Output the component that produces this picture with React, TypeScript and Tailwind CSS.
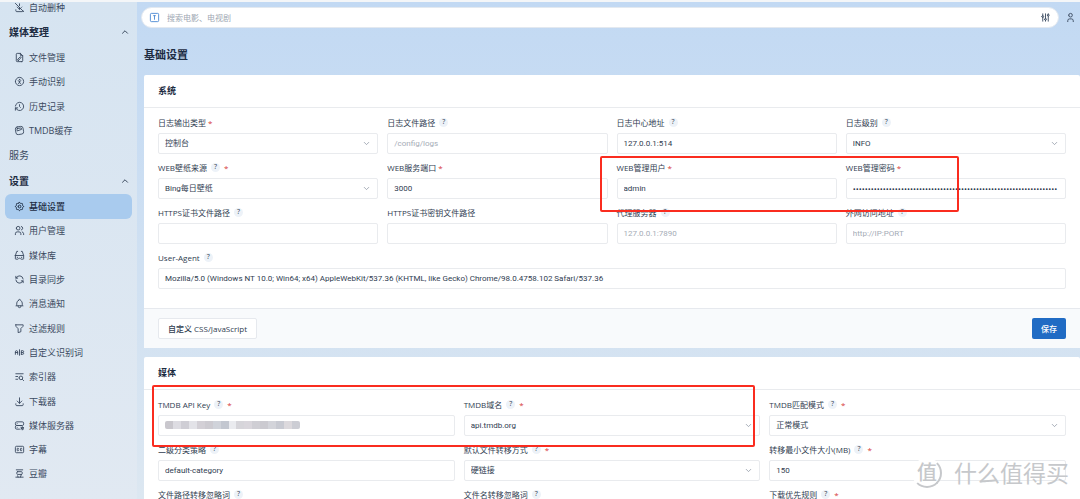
import React, { useId } from 'react';
import clsx from 'clsx';
import {
  TbAB,
  TbAccessible,
  TbAdjustments,
  TbBadgeCc,
  TbBell,
  TbBrandHeadlessui,
  TbChevronDown,
  TbChevronUp,
  TbDownload,
  TbDownloadOff,
  TbFilePencil,
  TbFilter,
  TbHistory,
  TbListSearch,
  TbRefresh,
  TbServerCog,
  TbSettings,
  TbSquareLetterT,
  TbStereoGlasses,
  TbUser,
  TbUsers,
} from 'react-icons/tb';

type IconType = React.ComponentType<{ className?: string }>;

function DoubanIcon({ className }: { className?: string }) {
  return (
    <svg
      viewBox="0 0 24 24"
      fill="none"
      stroke="currentColor"
      strokeWidth="2"
      strokeLinecap="round"
      strokeLinejoin="round"
      className={className}
    >
      <path d="M4 20h16" />
      <path d="M5 4h14" />
      <path d="M8 8h8a2 2 0 0 1 2 2v2a2 2 0 0 1 -2 2h-8a2 2 0 0 1 -2 -2v-2a2 2 0 0 1 2 -2z" />
      <path d="M16 14l-2 6" />
      <path d="M8 17l1 3" />
    </svg>
  );
}

const organizeItems: { label: string; icon: IconType }[] = [
  { label: '文件管理', icon: TbFilePencil },
  { label: '手动识别', icon: TbAccessible },
  { label: '历史记录', icon: TbHistory },
  { label: 'TMDB缓存', icon: TbBrandHeadlessui },
];

const settingItems: { label: string; icon: IconType }[] = [
  { label: '基础设置', icon: TbSettings },
  { label: '用户管理', icon: TbUsers },
  { label: '媒体库', icon: TbStereoGlasses },
  { label: '目录同步', icon: TbRefresh },
  { label: '消息通知', icon: TbBell },
  { label: '过滤规则', icon: TbFilter },
  { label: '自定义识别词', icon: TbAB },
  { label: '索引器', icon: TbListSearch },
  { label: '下载器', icon: TbDownload },
  { label: '媒体服务器', icon: TbServerCog },
  { label: '字幕', icon: TbBadgeCc },
  { label: '豆瓣', icon: DoubanIcon },
];

function NavItem({ label, icon: Icon, active }: { label: string; icon: IconType; active?: boolean }) {
  return (
    <a
      href="#"
      className={clsx(
        'flex min-h-0 flex-1 items-center rounded-md pl-[9px] text-[9px] leading-none',
        active ? 'bg-[#a9cbee] font-medium text-[#1d2c42]' : 'text-[#3b4a60]'
      )}
    >
      <Icon className="mr-1 h-[11px] w-[11px]" />
      {label}
    </a>
  );
}

function NavGroup({ label }: { label: string }) {
  return (
    <button
      type="button"
      className="flex h-[26px] shrink-0 items-center justify-between pl-1 pr-[2px] text-[10px] font-bold text-[#1d2c42]"
    >
      {label}
      <TbChevronUp className="h-[10px] w-[10px]" />
    </button>
  );
}

function Sidebar() {
  return (
    <aside className="w-[137px] shrink-0 overflow-hidden bg-linear-to-b from-[#d6e4f1] to-[#e1e9f2]">
      <nav className="-mt-[7px] flex h-full flex-col px-[5px] pb-[6px]">
        <NavItem label="自动删种" icon={TbDownloadOff} />
        <NavGroup label="媒体整理" />
        {organizeItems.map((item) => (
          <NavItem key={item.label} {...item} />
        ))}
        <a href="#" className="flex h-[26px] shrink-0 items-center pl-1 text-[10px] text-[#3b4a60]">
          服务
        </a>
        <NavGroup label="设置" />
        {settingItems.map((item, i) => (
          <NavItem key={item.label} {...item} active={i === 0} />
        ))}
      </nav>
    </aside>
  );
}

interface FieldProps {
  label: string;
  value?: string;
  placeholder?: string;
  type?: 'text' | 'password' | 'select';
  help?: boolean;
  required?: boolean;
  masked?: boolean;
  className?: string;
}

function MaskedKey() {
  return (
    <div className="absolute top-[6px] left-[7px] flex h-2 w-[135px] overflow-hidden rounded-xs">
      <span className="flex-1 bg-[#c9c7cd]" />
      <span className="flex-1 bg-[#dddce2]" />
      <span className="flex-1 bg-[#cfced5]" />
      <span className="flex-1 bg-[#e3e3e8]" />
      <span className="flex-1 bg-[#d3d0d6]" />
      <span className="flex-1 bg-[#cdcbd1]" />
      <span className="flex-1 bg-[#d0d3da]" />
      <span className="flex-1 bg-[#c3c7d0]" />
      <span className="flex-1 bg-[#eaebef]" />
      <span className="flex-1 bg-[#d6d5da]" />
      <span className="flex-1 bg-[#d9d6dc]" />
      <span className="flex-1 bg-[#cfced4]" />
      <span className="flex-1 bg-[#cbcad0]" />
      <span className="flex-1 bg-[#d3d4da]" />
      <span className="flex-1 bg-[#c8cad2]" />
      <span className="flex-1 bg-[#dcd9dd]" />
      <span className="flex-1 bg-[#cccdd4]" />
    </div>
  );
}

function Field({ label, value, placeholder, type = 'text', help, required, masked, className }: FieldProps) {
  const id = useId();
  const control = clsx(
    'block h-[21px] w-full appearance-none rounded-xs border border-[#e9ebee] bg-white px-[6px] text-[8px] text-[#2f3c50] outline-none placeholder:text-[#a5acb6]',
    type !== 'password' && "font-['Roboto','Noto_Sans_CJK_SC',sans-serif]"
  );

  return (
    <div className={className}>
      <div className="mb-[5px] flex h-[11px] items-center text-[8px] text-[#2f3c50]">
        <label htmlFor={id}>{label}</label>
        {help && (
          <span className="ml-1 flex h-[9px] w-[9px] items-center justify-center rounded-full bg-[#edf2f8] text-[7px]">
            ?
          </span>
        )}
        {required && <span className={clsx('text-[#d63939]', help ? 'ml-1' : 'ml-[2px]')}>*</span>}
      </div>
      <div className="relative">
        {type === 'select' ? (
          <>
            <select id={id} className={control}>
              <option>{value}</option>
            </select>
            <TbChevronDown className="pointer-events-none absolute top-[6px] right-[7px] h-[9px] w-[9px] text-[#8b94a1]" />
          </>
        ) : (
          <input id={id} type={type} defaultValue={value} placeholder={placeholder} className={control} />
        )}
        {masked && <MaskedKey />}
      </div>
    </div>
  );
}

function CardHeader({ title }: { title: string }) {
  return (
    <div className="flex h-[33px] items-center border-b border-[#e9ebee] px-[14px]">
      <h3 className="text-[9px] font-bold text-[#1d2c42]">{title}</h3>
    </div>
  );
}

function SystemCard() {
  return (
    <section className="rounded-xs bg-white">
      <CardHeader title="系统" />
      <div className="grid grid-cols-4 gap-x-[9px] gap-y-2 px-[14px] pt-[9px] pb-[19px]">
        <Field label="日志输出类型" type="select" value="控制台" required />
        <Field label="日志文件路径" placeholder="/config/logs" help />
        <Field label="日志中心地址" value="127.0.0.1:514" help />
        <Field label="日志级别" type="select" value="INFO" help />
        <Field label="WEB壁纸来源" type="select" value="Bing每日壁纸" help required />
        <Field label="WEB服务端口" value="3000" required />
        <Field label="WEB管理用户" value="admin" required />
        <Field label="WEB管理密码" type="password" value={'x'.repeat(68)} required />
        <Field label="HTTPS证书文件路径" help />
        <Field label="HTTPS证书密钥文件路径" />
        <Field label="代理服务器" placeholder="127.0.0.1:7890" help />
        <Field label="外网访问地址" placeholder="http://IP:PORT" help />
        <Field
          label="User-Agent"
          value="Mozilla/5.0 (Windows NT 10.0; Win64; x64) AppleWebKit/537.36 (KHTML, like Gecko) Chrome/98.0.4758.102 Safari/537.36"
          help
          className="col-span-4"
        />
      </div>
      <div className="flex h-10 items-center justify-between border-t border-[#e6e9ee] bg-[#f8fafc] px-[14px] text-[8px] font-medium">
        <button type="button" className="h-[21px] rounded-xs border border-[#e6e9ee] bg-white px-[9px] text-[#2f3c50]">
          自定义 CSS/JavaScript
        </button>
        <button type="button" className="h-[21px] rounded-xs bg-[#206bc4] px-[9px] text-white">
          保存
        </button>
      </div>
    </section>
  );
}

function MediaCard() {
  return (
    <section className="rounded-xs bg-white">
      <CardHeader title="媒体" />
      <div className="grid grid-cols-3 gap-x-[9px] gap-y-2 px-[14px] pt-[9px]">
        <Field label="TMDB API Key" help required masked />
        <Field label="TMDB域名" type="select" value="api.tmdb.org" help required />
        <Field label="TMDB匹配模式" type="select" value="正常模式" help required />
        <Field label="二级分类策略" value="default-category" help />
        <Field label="默认文件转移方式" type="select" value="硬链接" help required />
        <Field label="转移最小文件大小(MB)" value="150" help required />
        <Field label="文件路径转移忽略词" help />
        <Field label="文件名转移忽略词" help />
        <Field label="下载优先规则" type="select" help required />
      </div>
    </section>
  );
}

function Watermark() {
  return (
    <div className="pointer-events-none absolute right-[11px] bottom-[11px] flex items-center gap-3 text-[23px] leading-none text-[#c6c8cb]">
      <span className="flex h-[30px] w-[30px] items-center justify-center rounded-full border-2 border-t-white border-r-[#c6c8cb] border-b-[#c6c8cb] border-l-white bg-white text-[20px] font-medium">
        值
      </span>
      <span>什么值得买</span>
    </div>
  );
}

export default function App() {
  return (
    <div className="relative flex h-screen overflow-hidden border-t-2 border-[#f4f6f8] bg-linear-to-b from-[#c2d9f3] to-[#dce7f1] font-['Open_Sans','Noto_Sans_CJK_SC',sans-serif]">
      <Sidebar />
      <main className="min-w-0 flex-1">
        <header className="flex items-center gap-[6px] pt-[5px] pr-1 pl-1">
          <div className="flex h-[21px] flex-1 items-center rounded-full border border-[#e3e9f0] bg-white px-[7px]">
            <TbSquareLetterT className="h-[11px] w-[11px] text-[#4d8ad3]" />
            <input
              type="search"
              aria-label="搜索"
              placeholder="搜索电影、电视剧"
              className="ml-[7px] min-w-0 flex-1 bg-transparent text-[8px] outline-none placeholder:text-[#a0a8b3]"
            />
            <TbAdjustments className="h-[11px] w-[11px] text-[#3b4a60]" />
          </div>
          <TbUser className="h-[11px] w-[11px] text-[#3b4a60]" />
        </header>
        <div className="pl-[7px]">
          <h2 className="pt-[19px] pb-3 text-[11px] leading-4 font-bold text-[#1d2c42]">基础设置</h2>
          <div className="flex flex-col gap-[9px]">
            <SystemCard />
            <MediaCard />
          </div>
        </div>
      </main>

      <div className="pointer-events-none absolute top-[154px] left-[600px] h-[56px] w-[359px] rounded-xs border-2 border-[#fa2c1f]" />
      <div className="pointer-events-none absolute top-[383px] left-[152px] h-[62px] w-[603px] rounded-xs border-2 border-[#fa2c1f]" />
      <Watermark />
    </div>
  );
}
